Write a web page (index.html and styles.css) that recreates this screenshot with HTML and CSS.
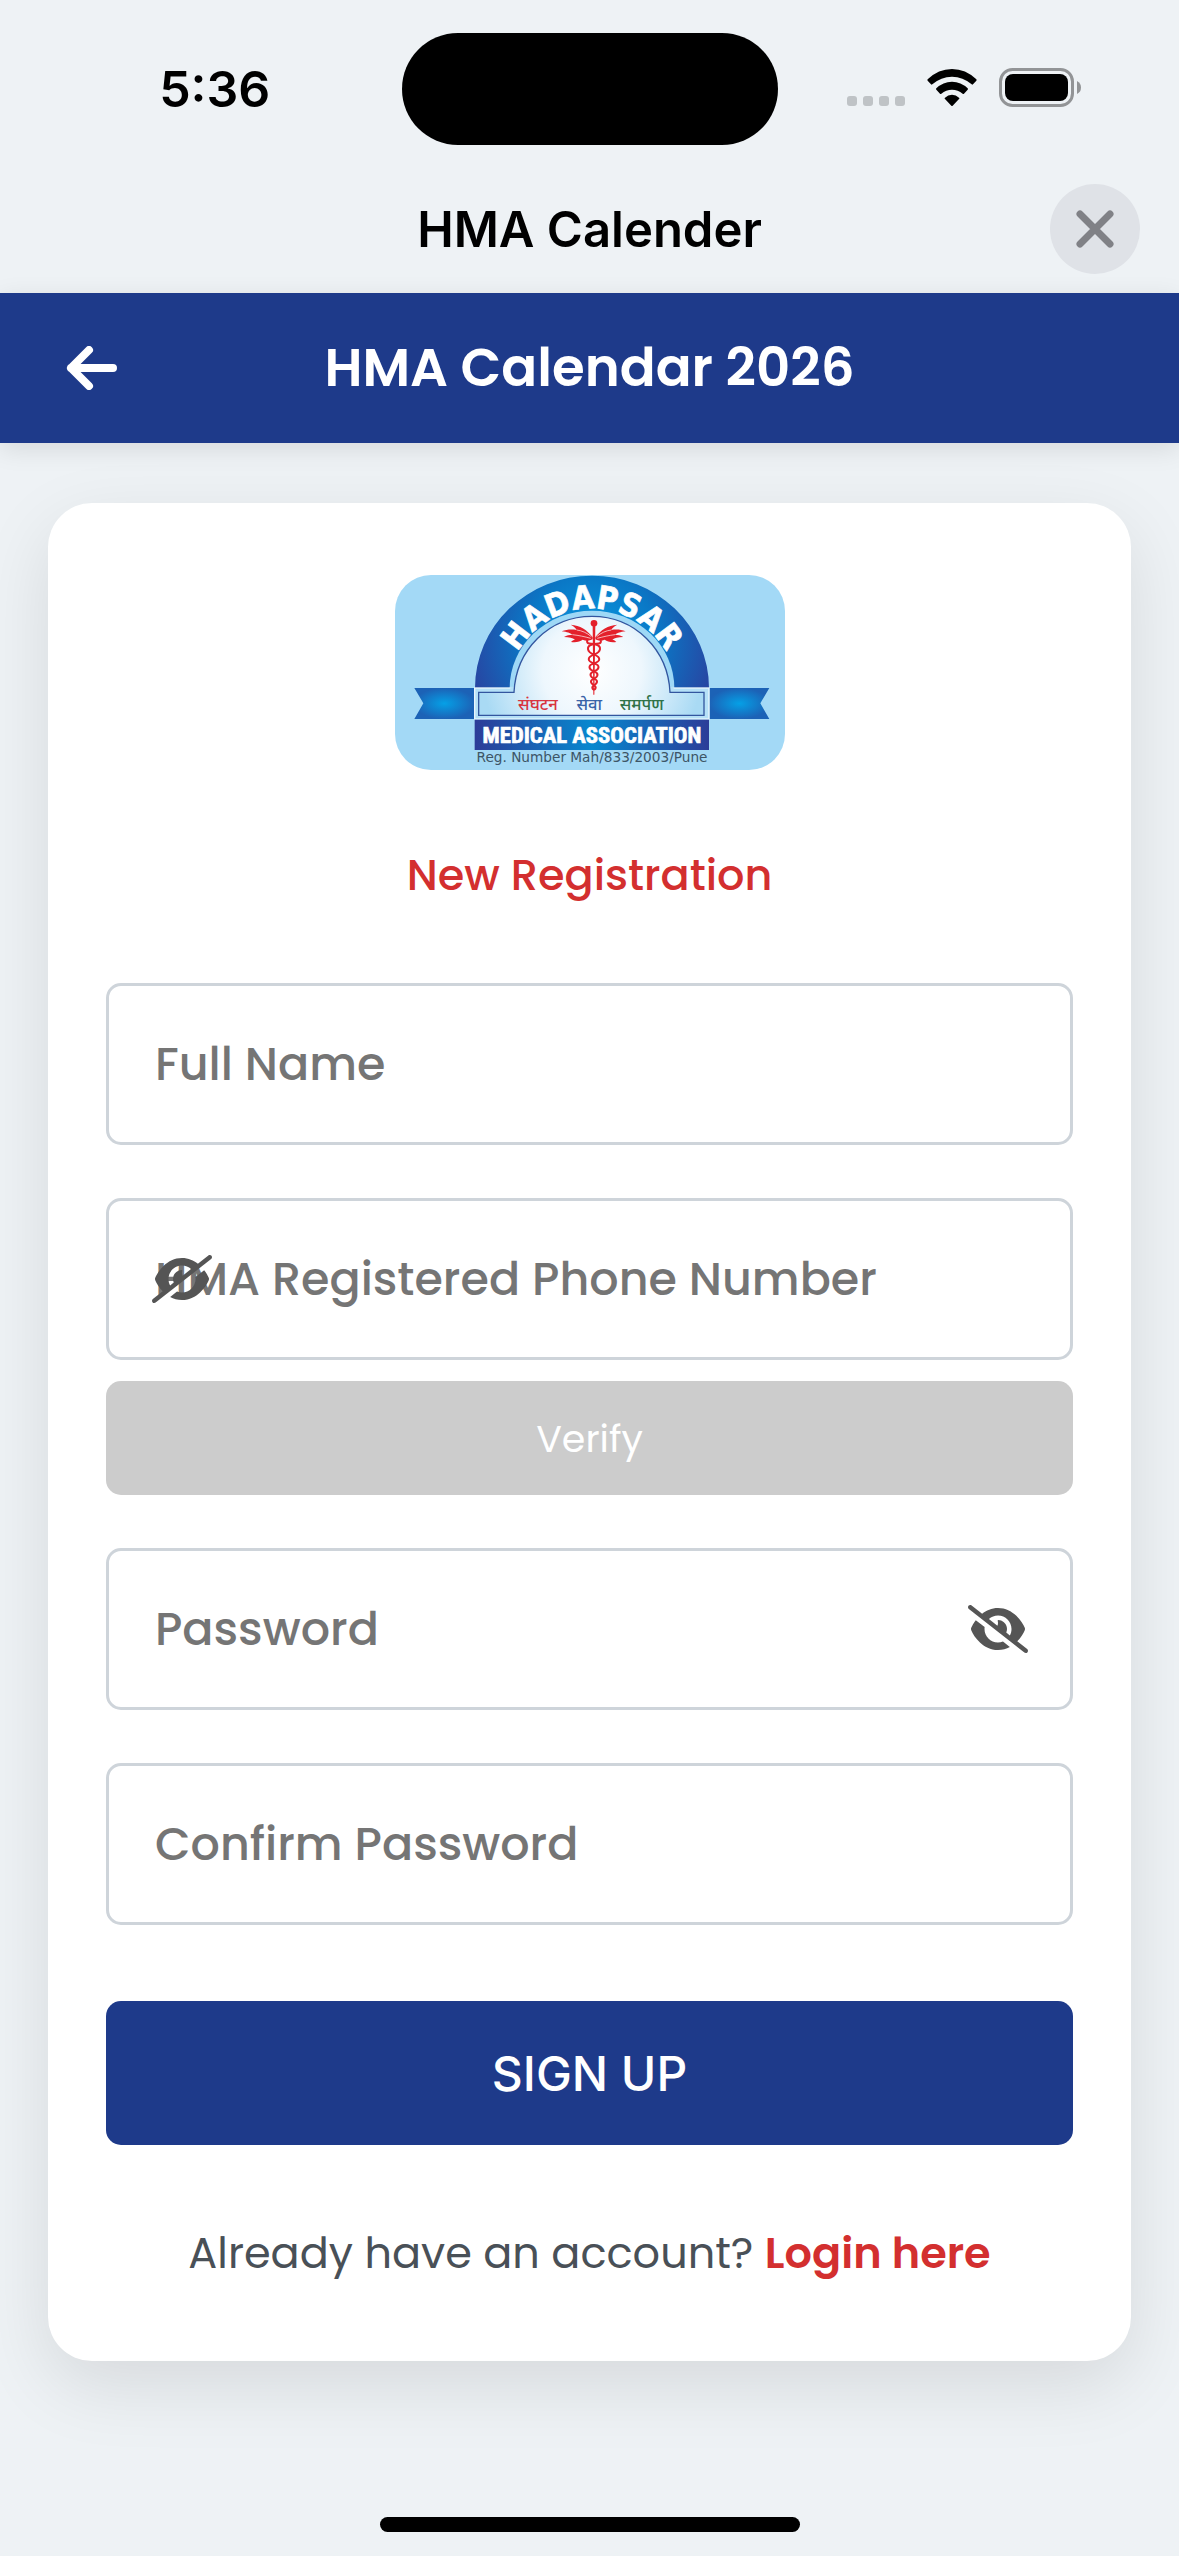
FILE: index.html
```html
<!DOCTYPE html>
<html lang="en">
<head>
  <meta charset="UTF-8" />
  <meta name="viewport" content="width=device-width, initial-scale=1.0"/>
  <title>HMA Calendar 2026 - New Registration</title>
  <link rel="stylesheet" href="styles.css">
</head>
<body>
  <div class="status-bar">
    <span class="time">5:36</span>
    <div class="island"></div>
    <div class="status-icons">
      <svg class="signal" viewBox="0 0 58 14" aria-hidden="true">
        <rect x="0" width="10" height="10" rx="3"/>
        <rect x="16" width="10" height="10" rx="3"/>
        <rect x="32" width="10" height="10" rx="3"/>
        <rect x="48" width="10" height="10" rx="3"/>
      </svg>
      <svg class="wifi" viewBox="0 0 150 123" aria-hidden="true">
        <path d="M2 31 Q0 33 2 35 L12 46 Q14 48 16 46 Q42 23 75 23 Q108 23 134 46 Q136 48 138 46 L148 35 Q150 33 148 31 Q116 0 75 0 Q34 0 2 31Z"/>
        <path d="M28 58 Q26 60 28 62 L39 74 Q41 76 43 74 Q57 62 75 62 Q93 62 107 74 Q109 76 111 74 L122 62 Q124 60 122 58 Q102 38 75 38 Q48 38 28 58Z"/>
        <path d="M54 86 Q51 88 54 90 L73 110 Q75 112 77 110 L96 90 Q99 88 96 86 Q87 77 75 77 Q63 77 54 86Z"/>
      </svg>
      <svg class="battery" viewBox="0 0 83 42" aria-hidden="true">
        <rect class="battery-case" x="1.5" y="1.5" width="72" height="36" rx="12"/>
        <rect x="6" y="6" width="63" height="27" rx="8"/>
        <path class="battery-tip" d="M78 13 Q82 15 82 19.500 Q82 24 78 26Z"/>
      </svg>
    </div>
  </div>

  <div class="sheet-bar">
    <span class="sheet-title">HMA Calender</span>
    <button type="button" class="close-btn" aria-label="Close">
      <svg viewBox="0 0 38 38" aria-hidden="true"><path d="M4 4 L34 34 M34 4 L4 34"/></svg>
    </button>
  </div>

  <header>
    <a href="#back" class="back-link" aria-label="Back">
      <svg viewBox="0 0 52 44" aria-hidden="true"><path d="M23 4 L5 22 L23 40 M5 22 H47"/></svg>
    </a>
    <h1>HMA Calendar 2026</h1>
  </header>

  <main>
    <div class="card">
      <svg class="logo" viewBox="45 45 1170 585" role="img" aria-label="Hadapsar Medical Association">
        <defs>
          <radialGradient id="dome" gradientUnits="userSpaceOnUse" cx="636" cy="240" r="390">
            <stop offset="0" stop-color="#0a9be2"/>
            <stop offset="0.5" stop-color="#0a78c6"/>
            <stop offset="1" stop-color="#2a419f"/>
          </radialGradient>
          <radialGradient id="plate" gradientUnits="userSpaceOnUse" cx="636" cy="330" r="330">
            <stop offset="0" stop-color="#ffffff"/>
            <stop offset="0.45" stop-color="#eef7fd"/>
            <stop offset="1" stop-color="#a9daf4"/>
          </radialGradient>
          <radialGradient id="ribbon">
            <stop offset="0" stop-color="#05a0e6"/>
            <stop offset="1" stop-color="#1c62b6"/>
          </radialGradient>
          <linearGradient id="banner">
            <stop offset="0" stop-color="#2c3c98"/>
            <stop offset="0.5" stop-color="#0788cf"/>
            <stop offset="1" stop-color="#2c3c98"/>
          </linearGradient>
          <path id="arc" d="M381 401 A255 255 0 0 1 891 401"/>
        </defs>
        <rect x="45" y="45" width="1170" height="585" fill="#a3d9f6"/>
        <path d="M103 384 H283 V477 H103 L130 430Z" fill="url(#ribbon)"/>
        <path d="M1168 384 H988 V477 H1168 L1141 430Z" fill="url(#ribbon)"/>
        <path d="M285 384 A351 337 0 0 1 987 384Z" fill="url(#dome)"/>
        <path d="M389 384 A247 232 0 0 1 883 384Z" fill="#9ed8f6"/>
        <rect x="284" y="384" width="703" height="93" fill="#b5e0f7" stroke="#e9f6fd" stroke-width="4"/>
        <path d="M391 390 H881 V380 H391Z" fill="#b5e0f7"/>
        <path d="M296 466 V397 H402 C408 270 506 169 636 169 C766 169 864 270 870 397 H972 V466Z" fill="url(#plate)" stroke="#33569f" stroke-width="4"/>
        <rect x="284" y="479" width="703" height="91" fill="url(#banner)"/>

        <g fill="#e3202b">
          <circle cx="642" cy="190" r="10"/>
          <path d="M638 196 H646 L643 404 H640Z"/>
          <path d="M638 232 C622 210 600 196 572 194 C584 201 588 205 590 210 C576 208 560 208 545 214 C562 216 570 219 577 224 C568 224 560 226 552 231 C568 231 578 234 585 239 C580 240 576 242 573 246 C590 248 600 245 608 239 C618 244 628 243 638 238Z"/>
          <path d="M646 232 C662 210 684 196 712 194 C700 201 696 205 694 210 C708 208 722 208 737 214 C720 216 712 219 705 224 C714 224 722 226 730 231 C714 231 704 234 697 239 C702 240 706 242 709 246 C692 248 682 245 674 239 C664 244 654 243 646 238Z"/>
        </g>
        <g fill="none" stroke="#ffffff" stroke-width="2">
          <path d="M634 230 C620 218 606 212 590 210 M632 235 C614 230 596 226 577 224"/>
          <path d="M650 230 C664 218 678 212 694 210 M652 235 C670 230 688 226 705 224"/>
        </g>
        <g fill="none" stroke="#e3202b" stroke-width="6">
          <path d="M622 240 C618 254 632 250 642 252 C670 258 662 276 642 284 C620 292 622 304 642 310 C662 316 658 328 642 334 C626 340 630 350 642 356 C656 362 652 370 642 376 C634 380 636 386 642 390"/>
          <path d="M662 240 C666 254 652 250 642 252 C614 258 622 276 642 284 C664 292 662 304 642 310 C622 316 626 328 642 334 C658 340 654 350 642 356 C628 362 632 370 642 376 C650 380 648 386 642 390"/>
        </g>

        <text class="logo-arc"><textPath href="#arc" startOffset="50%">HADAPSAR</textPath></text>
        <text class="logo-motto" x="474" y="450" fill="#d8343f">संघटन</text>
        <text class="logo-motto" x="628" y="450" fill="#3a63a8">सेवा</text>
        <text class="logo-motto" x="785" y="450" fill="#2f7248">समर्पण</text>
        <text class="logo-name" x="636" y="549">MEDICAL ASSOCIATION</text>
        <text class="logo-reg" x="636" y="605">Reg. Number Mah/833/2003/Pune</text>
      </svg>

      <h2>New Registration</h2>

      <form>
        <div class="field">
          <input type="text" placeholder="Full Name" aria-label="Full Name">
        </div>
        <div class="field">
          <input type="tel" placeholder="HMA Registered Phone Number" aria-label="HMA Registered Phone Number">
          <svg class="eye eye-left" viewBox="0 0 640 512" aria-hidden="true"><use href="#eye-slash"/></svg>
        </div>
        <button type="button" class="verify-btn" disabled>Verify</button>
        <div class="field">
          <input type="password" placeholder="Password" aria-label="Password">
          <button type="button" class="eye eye-right" aria-label="Show password">
            <svg viewBox="0 0 640 512" aria-hidden="true">
              <path id="eye-slash" d="M38.800 5.100C28.400-3.100 13.300-1.200 5.100 9.200S-1.200 34.700 9.200 42.900l592 464c10.400 8.200 25.500 6.300 33.700-4.100s6.300-25.500-4.100-33.700L525.600 386.700c39.600-40.600 66.400-86.100 79.900-118.400c3.300-7.900 3.300-16.700 0-24.600c-14.900-35.700-46.200-87.700-93-131.100C465.500 68.800 400.800 32 320 32c-68.200 0-125 26.300-169.300 60.800L38.800 5.100zM223.100 149.500C248.600 126.200 282.700 112 320 112c79.500 0 144 64.500 144 144c0 24.900-6.300 48.300-17.400 68.700L408 294.500c8.400-19.300 10.600-41.400 4.800-63.300c-11.100-41.500-47.800-69.400-88.600-71.100c-5.800-.2-9.200 6.100-7.400 11.700c2.100 6.400 3.300 13.200 3.300 20.300c0 10.200-2.400 19.800-6.600 28.300l-90.300-70.800zM373 389.900c-16.400 6.500-34.300 10.100-53 10.100c-79.500 0-144-64.500-144-144c0-6.900 .5-13.600 1.400-20.200L83.100 161.500C60.300 191.200 44 220.800 34.500 243.700c-3.300 7.900-3.300 16.700 0 24.600c14.900 35.700 46.200 87.700 93 131.100C174.500 443.200 239.200 480 320 480c47.800 0 89.900-12.900 126.200-32.500L373 389.900z"/>
            </svg>
          </button>
        </div>
        <div class="field">
          <input type="password" placeholder="Confirm Password" aria-label="Confirm Password">
        </div>
        <button type="submit" class="signup-btn">SIGN UP</button>
      </form>

      <p class="login-text">Already have an account? <a href="#login">Login here</a></p>
    </div>
  </main>

  <div class="home-indicator"></div>
</body>
</html>
```
FILE: styles.css
```css
:root {
  --primary: #1e3a8a;
  --accent: #d32f2f;
  --page-bg: #eef2f5;
  --border: #ced4da;
}

* {
  box-sizing: border-box;
  margin: 0;
  padding: 0;
}

body {
  font-family: Poppins, Inter, sans-serif;
  background: var(--page-bg);
  color: #495057;
  min-height: 100vh;
  display: flex;
  flex-direction: column;
}

/* phone status bar */
.status-bar {
  display: grid;
  grid-template-columns: 1fr 376px 1fr;
  align-items: center;
  padding: 33px 0 20px;
}

.time {
  font-family: Inter, sans-serif;
  font-size: 50px;
  font-weight: 600;
  color: #000;
  text-align: center;
  padding-left: 28px;
}

.island {
  height: 112px;
  border-radius: 56px;
  background: #000;
}

.status-icons {
  display: flex;
  justify-content: flex-end;
  align-items: flex-end;
  gap: 22px;
  padding-right: 97px;
}

.signal {
  width: 58px;
  height: 14px;
  fill: #bfc3c6;
}

.wifi {
  width: 50px;
  height: 41px;
}

.battery {
  width: 83px;
  height: 42px;
}

.battery-case {
  fill: none;
  stroke: #929496;
  stroke-width: 3;
}

.battery-tip {
  fill: #929496;
}

/* sheet title */
.sheet-bar {
  display: grid;
  grid-template-columns: 1fr auto 1fr;
  align-items: center;
  padding: 19px 39px;
}

.sheet-title {
  grid-column: 2;
  font-family: Inter, sans-serif;
  font-size: 49px;
  font-weight: 600;
  color: #000;
}

.close-btn {
  justify-self: end;
  display: flex;
  justify-content: center;
  align-items: center;
  width: 90px;
  height: 90px;
  border: none;
  border-radius: 50%;
  background: #dfe2e7;
  cursor: pointer;
}

.close-btn svg {
  width: 38px;
  height: 38px;
  stroke: #808186;
  stroke-width: 7;
  stroke-linecap: round;
}

header {
  display: grid;
  grid-template-columns: 1fr auto 1fr;
  align-items: center;
  height: 150px;
  padding: 0 66px;
  background: var(--primary);
  color: #fff;
  box-shadow: 0 6px 24px rgba(0, 0, 0, 0.1);
}

.back-link {
  display: flex;
}

.back-link svg {
  width: 52px;
  height: 44px;
  fill: none;
  stroke: #fff;
  stroke-width: 8;
  stroke-linecap: round;
  stroke-linejoin: round;
}

header h1 {
  font-size: 53px;
  font-weight: 600;
}

main {
  padding: 60px 48px;
}

.card {
  background: #fff;
  border-radius: 44px;
  padding: 72px 58px;
  box-shadow: 0 24px 72px rgba(0, 0, 0, 0.1);
  text-align: center;
}

.logo {
  display: block;
  width: 390px;
  height: 195px;
  margin: 0 auto;
  border-radius: 36px;
}

.logo-arc {
  font: bold 97px "DejaVu Sans Condensed", sans-serif;
  fill: #fff;
  stroke: #fff;
  stroke-width: 2;
  text-anchor: middle;
}

.logo-motto {
  font: 500 50px "Noto Sans Devanagari", "Noto Sans", sans-serif;
  text-anchor: middle;
}

.logo-name {
  font: bold 68px "Roboto Condensed", "DejaVu Sans Condensed", sans-serif;
  fill: #fff;
  stroke: #fff;
  stroke-width: 2;
  text-anchor: middle;
}

.logo-reg {
  font: 41px "DejaVu Sans", sans-serif;
  fill: #3d5566;
  text-anchor: middle;
}

h2 {
  margin: 75px 0 78px;
  font-size: 43px;
  line-height: 60px;
  font-weight: 500;
  color: var(--accent);
}

.field {
  position: relative;
  margin-bottom: 53px;
}

.field input {
  display: block;
  width: 100%;
  height: 162px;
  padding: 0 46px;
  border: 3px solid var(--border);
  border-radius: 15px;
  background: #fff;
  font-family: inherit;
  font-size: 46px;
  font-weight: 500;
  color: #212529;
}

.field input::placeholder {
  color: #757575;
  opacity: 1;
}

/* eye icons sit over the inputs */
.eye {
  position: absolute;
  top: 57px;
  width: 60px;
  height: 48px;
  border: none;
  background: none;
  fill: #555;
}

.eye svg {
  display: block;
  width: 60px;
  height: 48px;
}

.eye-left {
  left: 46px;
  transform: scaleX(-1);
}

.eye-right {
  right: 45px;
  cursor: pointer;
}

.verify-btn,
.signup-btn {
  display: block;
  width: 100%;
  border: none;
  border-radius: 15px;
  color: #fff;
  font-family: inherit;
  font-weight: 500;
}

.verify-btn {
  height: 114px;
  margin: -32px 0 53px;
  background: #ccc;
  font-size: 38px;
  font-weight: 400;
}

.signup-btn {
  height: 144px;
  margin-top: 76px;
  background: var(--primary);
  font-family: Inter, sans-serif;
  font-size: 48px;
  cursor: pointer;
}

.login-text {
  margin-top: 72px;
  font-size: 43px;
  line-height: 72px;
}

.login-text a {
  color: var(--accent);
  font-weight: 600;
  text-decoration: none;
}

.home-indicator {
  width: 420px;
  height: 15px;
  margin: auto auto 24px;
  border-radius: 8px;
  background: #000;
}
```
